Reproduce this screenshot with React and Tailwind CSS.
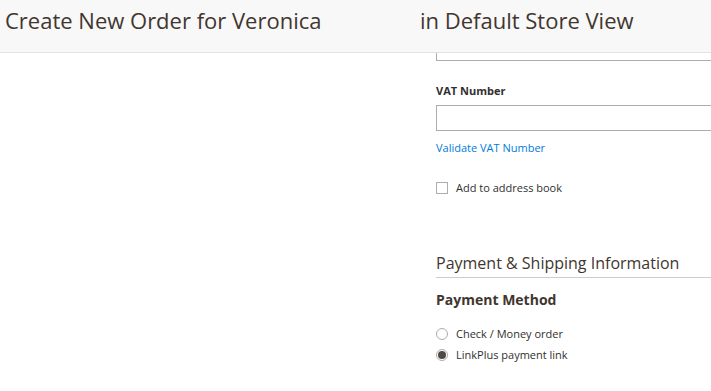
export default function App() {
  return (
    <div className="w-[711px] h-[391px] overflow-hidden bg-white text-[#303030]" style={{ fontFamily: '"Open Sans", sans-serif' }}>
      <div className="h-[53px] bg-[#f8f8f8] border-b border-[#e3e3e3] flex items-center pb-[11px]">
        <h1 className="w-[420px] pl-[5px] text-[22px] text-[#41362f] font-normal whitespace-nowrap">Create New Order for Veronica</h1>
        <span className="text-[22px] text-[#41362f] whitespace-nowrap">in Default Store View</span>
      </div>

      <div className="flex">
        <div className="w-[436px] shrink-0"></div>
        <div className="w-[400px] shrink-0">
          <div className="h-[8px] border-x border-b border-[#adadad]"></div>

          <div className="mt-[22px] text-[11px] font-bold leading-[16px]">VAT Number</div>
          <div className="mt-[6px] h-[26px] border border-[#adadad] bg-white"></div>
          <div className="mt-[9px] text-[11px] leading-[16px] text-[#007bdb]">Validate VAT Number</div>

          <div className="mt-[24px] flex items-center gap-[8px]">
            <span className="w-[12px] h-[12px] border border-[#adadad] bg-white"></span>
            <span className="text-[11px] leading-[16px]">Add to address book</span>
          </div>

          <div className="mt-[56px] text-[16px] leading-[22px] text-[#41362f] border-b border-[#cccccc] pb-[3px]">Payment &amp; Shipping Information</div>
          <div className="mt-[13px] text-[14px] font-bold leading-[18px] text-[#41362f]">Payment Method</div>

          <div className="mt-[17px] flex items-center gap-[8px] h-[16px]">
            <span className="w-[12px] h-[12px] rounded-full border border-[#adadad] bg-white"></span>
            <span className="text-[11px] leading-[16px]">Check / Money order</span>
          </div>
          <div className="mt-[5px] flex items-center gap-[8px] h-[16px]">
            <span className="w-[12px] h-[12px] rounded-full border border-[#adadad] bg-white flex items-center justify-center">
              <span className="w-[8px] h-[8px] rounded-full bg-[#514943]"></span>
            </span>
            <span className="text-[11px] leading-[16px]">LinkPlus payment link</span>
          </div>
        </div>
      </div>
    </div>
  )
}
